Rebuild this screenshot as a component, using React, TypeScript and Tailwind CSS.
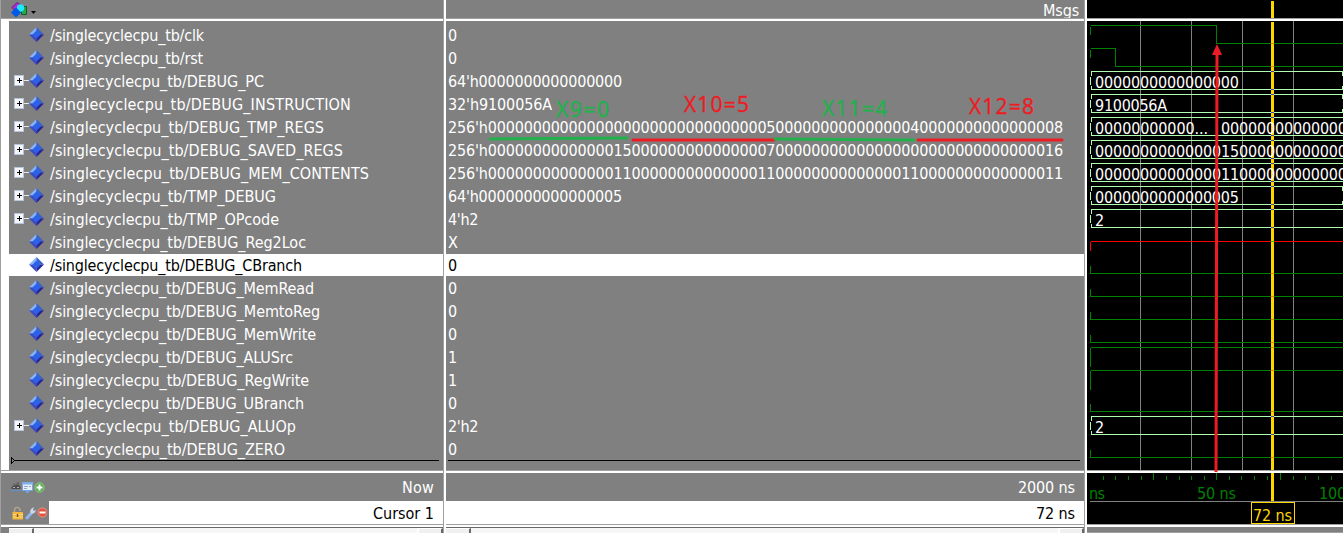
import React, { useLayoutEffect, useRef } from "react";

type Wave =
  | { kind: "high" | "low" | "unknown" | "clk" | "rst" }
  | { kind: "bus"; label: string; end?: boolean; next?: string };

interface Signal {
  name: string;
  nameWidth: number;
  value: string;
  valueWidth?: number;
  expandable?: boolean;
  selected?: boolean;
  wave: Wave;
}

const zeros = (n: number) => "0".repeat(n);

const signals: Signal[] = [
  { name: "clk", nameWidth: 154, value: "0", wave: { kind: "clk" } },
  { name: "rst", nameWidth: 153, value: "0", wave: { kind: "rst" } },
  { name: "DEBUG_PC", nameWidth: 214, value: "64'h" + zeros(16), valueWidth: 174, expandable: true, wave: { kind: "bus", label: zeros(16), end: true } },
  { name: "DEBUG_INSTRUCTION", nameWidth: 301, value: "32'h9100056A", valueWidth: 104, expandable: true, wave: { kind: "bus", label: "9100056A", end: true } },
  { name: "DEBUG_TMP_REGS", nameWidth: 274, value: "256'h" + zeros(31) + "5" + zeros(15) + "4" + zeros(15) + "8", valueWidth: 615, expandable: true, wave: { kind: "bus", label: "00000000000...", next: zeros(15) } },
  { name: "DEBUG_SAVED_REGS", nameWidth: 293, value: "256'h" + zeros(14) + "15" + zeros(15) + "7" + zeros(30) + "16", valueWidth: 615, expandable: true, wave: { kind: "bus", label: zeros(14) + "15" + zeros(12) } },
  { name: "DEBUG_MEM_CONTENTS", nameWidth: 319, value: "256'h" + (zeros(14) + "11").repeat(4), valueWidth: 615, expandable: true, wave: { kind: "bus", label: zeros(14) + "11" + zeros(12) } },
  { name: "TMP_DEBUG", nameWidth: 226, value: "64'h" + zeros(15) + "5", valueWidth: 174, expandable: true, wave: { kind: "bus", label: zeros(15) + "5", end: true } },
  { name: "TMP_OPcode", nameWidth: 229, value: "4'h2", valueWidth: 30, expandable: true, wave: { kind: "bus", label: "2" } },
  { name: "DEBUG_Reg2Loc", nameWidth: 256, value: "X", wave: { kind: "unknown" } },
  { name: "DEBUG_CBranch", nameWidth: 252, value: "0", selected: true, wave: { kind: "low" } },
  { name: "DEBUG_MemRead", nameWidth: 264, value: "0", wave: { kind: "low" } },
  { name: "DEBUG_MemtoReg", nameWidth: 270, value: "0", wave: { kind: "low" } },
  { name: "DEBUG_MemWrite", nameWidth: 266, value: "0", wave: { kind: "low" } },
  { name: "DEBUG_ALUSrc", nameWidth: 243, value: "1", wave: { kind: "high" } },
  { name: "DEBUG_RegWrite", nameWidth: 259, value: "1", wave: { kind: "high" } },
  { name: "DEBUG_UBranch", nameWidth: 254, value: "0", wave: { kind: "low" } },
  { name: "DEBUG_ALUOp", nameWidth: 246, value: "2'h2", valueWidth: 30, expandable: true, wave: { kind: "bus", label: "2" } },
  { name: "DEBUG_ZERO", nameWidth: 235, value: "0", wave: { kind: "low" } },
];

/** Text whose tracking is adjusted so that it fills the given width. */
function Fit({ text, width }: { text: string; width?: number }) {
  const ref = useRef<HTMLSpanElement>(null);
  useLayoutEffect(() => {
    const el = ref.current;
    if (!el || !width) return;
    el.style.letterSpacing = "0px";
    const natural = el.getBoundingClientRect().width;
    el.style.letterSpacing = `${(width - natural) / text.length}px`;
  }, [text, width]);
  return (
    <span ref={ref} className="whitespace-pre">
      {text}
    </span>
  );
}

function Diamond() {
  return (
    <svg width="16" height="16" viewBox="0 0 16 16" className="shrink-0">
      <path d="M7.5 0L0 7.5h4L7.5 4z" fill="#86b4fa" />
      <path d="M7.5 0L15 7.5h-4L7.5 4z" fill="#3a62c8" />
      <path d="M0 7.5L7.5 15v-4L4 7.5z" fill="#3a4cc4" />
      <path d="M15 7.5L7.5 15v-4L11 7.5z" fill="#2a2496" />
      <path d="M7.5 3.5l4 4-4 4-4-4z" fill="#2a62ee" />
    </svg>
  );
}

function Expander() {
  return (
    <svg width="15" height="12" viewBox="0 0 15 12" className="shrink-0" shapeRendering="crispEdges">
      <path d="M10 5.5h5" stroke="#e8e8e8" />
      <rect x="0.5" y="0.5" width="9" height="10" fill="#f4f6fb" stroke="#b8c4da" />
      <path d="M3 5.500h5M5.500 3v5" stroke="#000" />
    </svg>
  );
}

function NameRow({ s }: { s: Signal }) {
  return (
    <div className={"flex h-[23px] items-start " + (s.selected ? "text-black" : "text-white")}>
      <div className={"flex h-[22px] w-full items-center " + (s.selected ? "bg-white" : "")}>
        <div className="flex w-5 shrink-0 justify-end">{s.expandable && <Expander />}</div>
        <Diamond />
        <div className="ml-[5px] pt-[2px] leading-[22px]">
          <Fit text={"/singlecyclecpu_tb/" + s.name} width={s.nameWidth} />
        </div>
      </div>
    </div>
  );
}

function ValueRow({ s }: { s: Signal }) {
  return (
    <div className="h-[23px]">
      <div className={"h-[22px] pl-[2px] leading-[24px] " + (s.selected ? "bg-white text-black" : "text-white")}>
        <Fit text={s.value} width={s.valueWidth} />
      </div>
    </div>
  );
}

function HRule() {
  return <div className="h-[3px] shrink-0 border-t border-[#a0a0a0] bg-white" />;
}

function VRule() {
  return <div className="w-[3px] shrink-0 border-l border-[#a0a0a0] bg-white" />;
}

function ScrollTrack() {
  return (
    <div className="flex h-[6px] border-t border-[#696969] bg-[#f6f6f6]">
      <div className="w-[25px] border-r-2 border-t border-[#696969] border-t-white bg-[#f0f0f0]" />
      <div className="grow" />
      <div className="w-[26px] border-l-2 border-r-2 border-t border-l-white border-r-[#696969] border-t-white bg-[#f0f0f0]" />
    </div>
  );
}

function WaveRow({ wave, index }: { wave: Wave; index: number }) {
  const hi = 4.5 + 23 * index;
  const lo = hi + 18;
  const mid = hi + 9;
  if (wave.kind === "bus") {
    const edge = (x: number) => `M${x + 1} ${hi}v4.5M${x} ${hi + 5}v8.5M${x + 1} ${hi + 14}v4.5`;
    return (
      <g fill="none" stroke="#b0ffb0">
        <path d={`M4 ${hi}H256M4 ${lo}H256`} />
        <path d={edge(3.5)} />
        {wave.end && <path d={`M255.5 ${hi}v4.5M255.5 ${hi + 14}v4.5`} />}
        {wave.next && <path d={edge(129.5)} />}
      </g>
    );
  }
  const paths = {
    clk: `M3.5 ${mid}V${hi + 1}M4 ${hi}H129.5V${lo}H256`,
    rst: `M3.5 ${mid}V${hi + 1}M4 ${hi}H28.5V${lo}H256`,
    high: `M3.5 ${lo + 1}V${hi + 0.5}M4 ${hi}H256`,
    low: `M3.5 ${mid + 1}V${lo}H256`,
    unknown: `M3.5 ${mid + 9}V${mid + 0.5}M4 ${mid}H256`,
  };
  return <path d={paths[wave.kind]} fill="none" stroke={wave.kind === "unknown" ? "#ff0000" : "#008000"} />;
}

function WavePanel() {
  return (
    <svg width="256" height="449" className="block text-[16px]">
      <rect width="256" height="449" fill="#000" />
      <g shapeRendering="crispEdges">
        <path d="M53.5 0V449M104.5 0V449M155.5 0V449M206.5 0V449" stroke="#808080" />
        {signals.map((s, i) => (
          <WaveRow key={s.name} wave={s.wave} index={i} />
        ))}
        <rect x="184" y="1" width="3" height="448" fill="#ffd700" />
        {signals.map((s, i) => {
          const hi = 4 + 23 * i;
          const k = s.wave.kind;
          const marks =
            k === "bus" ? [hi, hi + 18] : k === "high" ? [hi] : k === "unknown" ? [hi + 9] : [hi + 18];
          const fill = k === "bus" ? "#4f3bb0" : k === "unknown" ? "#20c800" : "#ff7800";
          return marks.map((y) => <rect key={`${i}-${y}`} x="184" y={y} width="3" height="1" fill={fill} />);
        })}
      </g>
      {signals.map((s, i) => {
        if (s.wave.kind !== "bus") return null;
        const y = 20.5 + 23 * i;
        const n = s.wave.label.length;
        return (
          <g key={s.name} fill="#fff">
            <text x="8" y={y} textLength={s.wave.next ? 113 : n * 9}>
              {s.wave.label}
            </text>
            {s.wave.next && (
              <text x="134" y={y} textLength="135">
                {s.wave.next}
              </text>
            )}
          </g>
        );
      })}
    </svg>
  );
}

const minorTicks = [16, 28, 41, 54, 79, 92, 104, 117, 142, 154, 167, 180, 206, 218, 231, 244];
const majorTicks = [66, 129, 193];

function Timeline() {
  return (
    <svg width="256" height="51" className="block text-[16px]">
      <rect width="256" height="51" fill="#000" />
      <g shapeRendering="crispEdges">
        {minorTicks.map((x) => (
          <rect key={x} x={x} y="3" width="1" height="4" fill="#008000" />
        ))}
        {majorTicks.map((x) => (
          <rect key={x} x={x} y="0" width="1" height="7" fill="#008000" />
        ))}
        <rect x="3" y="28" width="253" height="1" fill="#808080" />
        <rect x="184" y="0" width="3" height="28" fill="#ffd700" />
        <rect x="164.5" y="29.5" width="43" height="21" fill="#000" stroke="#ffd700" />
      </g>
      <g fill="#008000">
        <text x="2" y="26" textLength="16">ns</text>
        <text x="110" y="26" textLength="39">50 ns</text>
        <text x="232" y="26" textLength="48">100 ns</text>
      </g>
      <text x="166" y="48" textLength="39" fill="#ffd700">72 ns</text>
    </svg>
  );
}

function ObjectsIcon() {
  return (
    <svg width="28" height="16" viewBox="0 0 28 16" className="block">
      <path d="M10.5 4.500h5v8h-5z" fill="#22aa44" stroke="#145a2a" />
      <path d="M0.800 5.500L6 0.500l4 2.500-6 5.500z" fill="#b428d8" stroke="#5a1470" strokeWidth="0.800" />
      <circle cx="9.500" cy="6" r="3.700" fill="#20e8f8" />
      <path d="M5 5.500l5 5-5 5-5-5z" fill="#0058e8" />
      <path d="M20 9h5l-2.500 3z" fill="#000" />
    </svg>
  );
}

function NowIcons() {
  return (
    <svg width="36" height="13" viewBox="0 0 36 13">
      <path d="M1.500 8V6L3 5V3l2-.5L6 5l1-3.500h2L9 4l1.500 2v2z" fill="#4c4c4c" />
      <path d="M3.500 4h1M7.500 3h1M3 6.500h2M7 6.500h2" stroke="#b4b4b4" />
      <path d="M1 9.500h9M2.500 8L1 9.500 2.500 11M8.500 8L10 9.500 8.500 11" fill="none" stroke="#5d8fc8" />
      <rect x="12.500" y="1.500" width="10" height="8" fill="#e4eefb" stroke="#7ea6dc" />
      <path d="M12 2.500h11" stroke="#7fb0ec" strokeWidth="2" />
      <path d="M14 5.500h4M14 7.500h3M19 5.500h2" stroke="#9ab" />
      <path d="M14 9h7l-3.500 3.500z" fill="#6fa3e4" />
      <circle cx="29.500" cy="6.500" r="4.700" fill="#59ad50" stroke="#8dca87" />
      <path d="M26.500 6.500h6M29.500 3.500v6" stroke="#fff" strokeWidth="2" />
    </svg>
  );
}

function CursorIcons() {
  return (
    <svg width="37" height="14" viewBox="0 0 37 14" className="shrink-0">
      <path d="M4.500 6V4a2.800 2.800 0 0 1 5.500-.5V5" fill="none" stroke="#b8aa88" strokeWidth="1.400" />
      <rect x="2.500" y="6" width="10.500" height="7.500" fill="#f4b63c" />
      <path d="M3 8.500h10M3 11h10" stroke="#ffd77c" />
      <path d="M7.500 8v3" stroke="#7c5820" strokeWidth="1.500" />
      <path d="M17 12L21 7.500" stroke="#8fb6ec" strokeWidth="3" strokeLinecap="round" />
      <path d="M20 6l1-3 3-2-1 3 1 1L26 3.500l-1 3-3 1.500z" fill="#ccd8ea" />
      <circle cx="32.500" cy="6.500" r="4.600" fill="#e25542" stroke="#f09080" />
      <path d="M29.500 6.500h6" stroke="#fff" strokeWidth="2" />
    </svg>
  );
}

function Annotations() {
  return (
    <svg width="1343" height="533" className="pointer-events-none absolute inset-0">
      <g fontSize="21" strokeWidth="0.4" className="font-['Open_Sans','Noto_Sans',sans-serif]">
        <text x="556" y="117" textLength="53" fill="#22b14c" stroke="#22b14c">X9=0</text>
        <text x="684" y="112" textLength="65" fill="#ed1c24" stroke="#ed1c24">X10=5</text>
        <text x="822" y="116" textLength="65" fill="#22b14c" stroke="#22b14c">X11=4</text>
        <text x="969" y="114" textLength="65" fill="#ed1c24" stroke="#ed1c24">X12=8</text>
      </g>
      <g fill="none" strokeWidth="3" strokeLinecap="round">
        <path d="M490 139L627 138" stroke="#22b14c" />
        <path d="M633 140H774" stroke="#ed1c24" />
        <path d="M775 139L914 140" stroke="#22b14c" />
        <path d="M918 140H1062" stroke="#ed1c24" />
      </g>
      <path d="M1217 50L1216 472" stroke="#ed1c24" strokeWidth="3" />
      <path d="M1217 44l5 11h-10z" fill="#ed1c24" />
    </svg>
  );
}

export default function App() {
  return (
    <div className="relative flex h-[533px] w-[1343px] overflow-hidden bg-[#808080] font-['DejaVu_Sans_Condensed','DejaVu_Sans',sans-serif] text-[16px] text-white">
      <div className="w-px shrink-0 bg-[#a0a0a0]" />

      <div className="flex w-[442px] shrink-0 flex-col">
        <div className="h-[18px] pl-[10px] pt-[2px]">
          <ObjectsIcon />
        </div>
        <HRule />
        <div className="flex h-[449px]">
          <div className="w-2 shrink-0 bg-white" />
          <div className="grow pt-[3px]">
            {signals.map((s) => (
              <NameRow key={s.name} s={s} />
            ))}
            <div className="-mt-[4px] pl-[2px]">
              <svg width="430" height="8" className="block">
                <path d="M0.500 0.500v6l3-3zM3 3.500H428" fill="none" stroke="#000" shapeRendering="crispEdges" />
              </svg>
            </div>
          </div>
        </div>
        <HRule />
        <div className="flex h-[28px] items-center justify-between pl-[9px] pr-[9px]">
          <NowIcons />
          <div className="pt-[2px]">
            <Fit text="Now" width={32} />
          </div>
        </div>
        <div className="flex h-[23px]">
          <div className="flex w-12 items-center pl-[9px]">
            <CursorIcons />
          </div>
          <div className="flex grow items-center justify-end bg-white pt-[2px] pr-[9px] text-black">
            <Fit text="Cursor 1" width={61} />
          </div>
        </div>
        <HRule />
        <div className="pl-2">
          <ScrollTrack />
        </div>
      </div>

      <VRule />

      <div className="flex w-[638px] shrink-0 flex-col">
        <div className="h-[18px] pr-[5px] text-right leading-[21px]">
          <Fit text="Msgs" width={36} />
        </div>
        <HRule />
        <div className="h-[449px] pt-[3px]">
          {signals.map((s) => (
            <ValueRow key={s.name} s={s} />
          ))}
          <div className="-mt-px ml-[2px] mr-[4px] h-px bg-black" />
        </div>
        <HRule />
        <div className="flex h-[28px] items-center justify-end pt-[2px] pr-[9px]">
          <Fit text="2000 ns" width={57} />
        </div>
        <div className="flex h-[23px] items-center justify-end bg-white pt-[2px] pr-[9px] text-black">
          <Fit text="72 ns" width={39} />
        </div>
        <HRule />
        <ScrollTrack />
      </div>

      <VRule />

      <div className="flex w-[256px] shrink-0 flex-col">
        <div className="h-[18px] bg-black pl-[184px] pt-px">
          <div className="h-[17px] w-[3px] bg-[#ffd700]" />
        </div>
        <HRule />
        <WavePanel />
        <HRule />
        <Timeline />
        <HRule />
        <div className="h-[6px] border-b border-[#a0a0a0]" />
      </div>

      <Annotations />
    </div>
  );
}
